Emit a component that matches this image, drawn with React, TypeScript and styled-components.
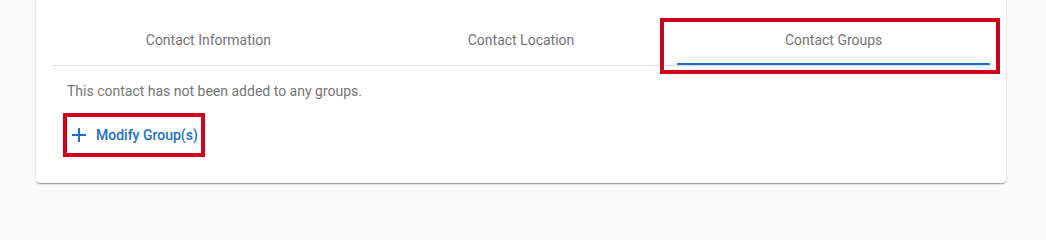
import styled, { createGlobalStyle } from 'styled-components';

const GlobalStyle = createGlobalStyle`
  body {
    margin: 0;
    background: #fafafa;
    font-family: Roboto, "Liberation Sans", sans-serif;
  }
`;

const Page = styled.div`
  padding: 0 40px 20px 36px;
`;

const Card = styled.section`
  margin-top: -8px;
  padding: 25px 16px 0;
  background: #fff;
  border-radius: 4px;
  box-shadow: 0 2px 1px -1px rgba(0, 0, 0, 0.2), 0 1px 1px 0 rgba(0, 0, 0, 0.14),
    0 1px 3px 0 rgba(0, 0, 0, 0.12);
`;

const TabList = styled.div`
  display: flex;
  border-bottom: 1px solid #e0e0e0;
`;

const Tab = styled.button<{ $active?: boolean }>`
  position: relative;
  flex: 1;
  height: 48px;
  border: 0;
  background: none;
  font-family: inherit;
  font-size: 14px;
  color: #757575;
  cursor: pointer;
  border-bottom: 2px solid ${p => (p.$active ? '#1971c8' : 'transparent')};
  padding: 0;
  box-sizing: border-box;
`;

const Highlight = styled.span`
  position: absolute;
  left: -17px;
  right: -10px;
  top: 1px;
  bottom: -11px;
  border: 4px solid #d0021b;
  pointer-events: none;
`;

const Body = styled.div`
  padding: 15px 15px 26px 11px;
`;

const Message = styled.p`
  margin: 0 0 12px 4px;
  font-size: 14px;
  line-height: 20px;
  color: #757575;
`;

const ActionButton = styled.button`
  display: inline-flex;
  align-items: center;
  gap: 10px;
  height: 44px;
  box-sizing: border-box;
  padding: 0 3px 0 5px;
  border: 4px solid #d0021b;
  background: #fff;
  font-family: inherit;
  font-size: 14px;
  font-weight: 500;
  color: #1971c8;
  cursor: pointer;
`;

const PlusIcon = () => (
  <svg width="14" height="14" viewBox="0 0 14 14" fill="none">
    <path d="M7 0v14M0 7h14" stroke="#1971c8" strokeWidth="2" />
  </svg>
);

export default function App() {
  const tabs = ['Contact Information', 'Contact Location', 'Contact Groups'];
  const active = 2;

  return (
    <>
      <GlobalStyle />
      <Page>
        <Card>
          <TabList>
            {tabs.map((label, i) => (
              <Tab key={label} $active={i === active}>
                {label}
                {i === active && <Highlight />}
              </Tab>
            ))}
          </TabList>
          <Body>
            <Message>This contact has not been added to any groups.</Message>
            <ActionButton>
              <PlusIcon />
              Modify Group(s)
            </ActionButton>
          </Body>
        </Card>
      </Page>
    </>
  );
}
